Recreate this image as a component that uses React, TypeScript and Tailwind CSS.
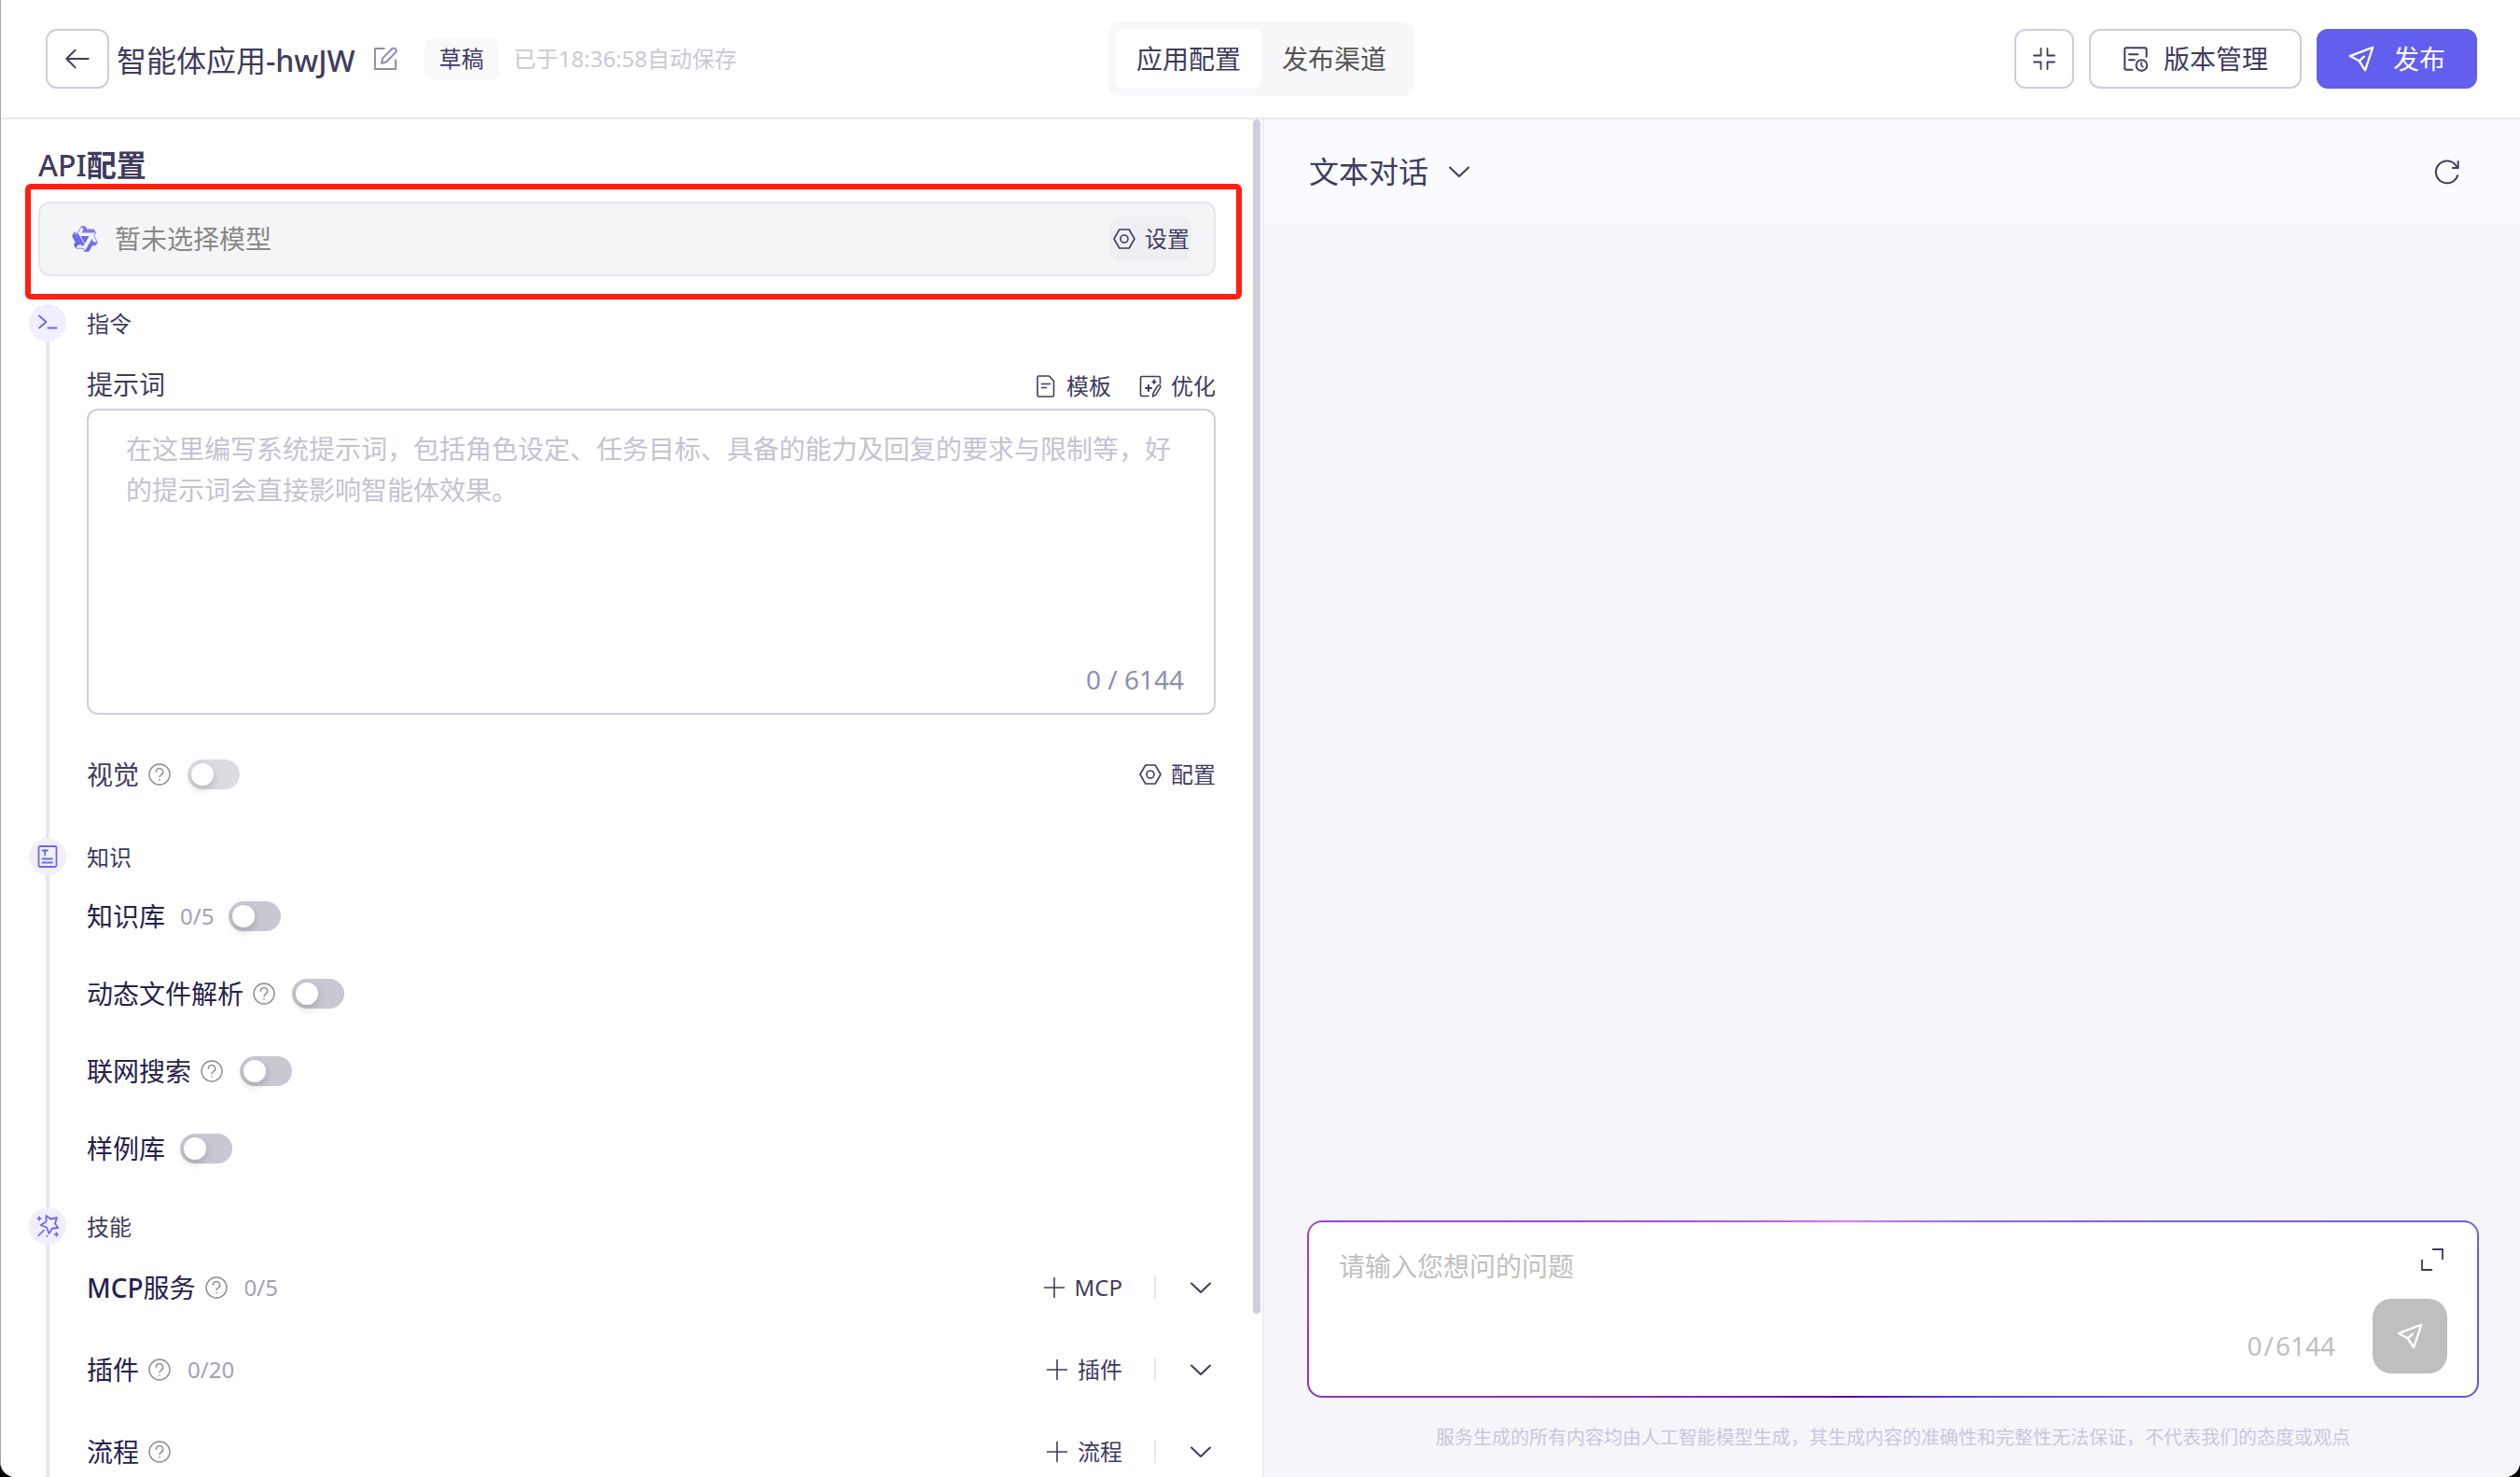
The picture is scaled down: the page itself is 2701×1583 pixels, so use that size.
import { useId, useState } from 'react'
import type { ReactNode } from 'react'

const PROMPT_LIMIT = 6144

function Icon({ children, className = 'size-6', width = 2 }: { children: ReactNode; className?: string; width?: number }) {
  return (
    <svg
      viewBox="0 0 24 24"
      className={`${className} shrink-0`}
      fill="none"
      stroke="currentColor"
      strokeWidth={width}
      strokeLinecap="round"
      strokeLinejoin="round"
      aria-hidden="true"
    >
      {children}
    </svg>
  )
}

const ArrowLeftIcon = () => (
  <Icon className="size-7">
    <path d="M22 12H3M10 4l-8 8 8 8" strokeWidth="1.7" />
  </Icon>
)

const EditIcon = () => (
  <Icon className="size-7">
    <path d="M11 2.5H2.5v19h19V13" strokeWidth="1.7" />
    <path d="M8.5 16l1-4.5 8.5-8.5a2.3 2.3 0 0 1 3.3 3.3L12.8 15z" strokeWidth="1.7" />
  </Icon>
)

const CollapseIcon = () => (
  <Icon>
    <path d="M8.5 1v7.5H1M15.5 1v7.5H23M8.5 23v-7.5H1M15.5 23v-7.5H23" strokeWidth="1.8" />
  </Icon>
)

const VersionIcon = () => (
  <Icon className="size-7">
    <path d="M22 10V3.5A1.5 1.5 0 0 0 20.5 2h-17A1.5 1.5 0 0 0 2 3.5v17A1.5 1.5 0 0 0 3.5 22H9M6 8h8M6 13h5" strokeWidth="1.7" />
    <circle cx="17.5" cy="18" r="5" strokeWidth="1.7" />
    <path d="M17.3 15.5V18l1.5 1.5" strokeWidth="1.5" />
  </Icon>
)

const SendIcon = () => (
  <Icon className="size-7">
    <path d="M22.5 1.5 1.5 9.5l8.5 4.5 5.5 8.5zM10 14l4.5-4" />
  </Icon>
)

const NutIcon = () => (
  <Icon>
    <path d="M6.8 2h10.4l5.8 10-5.8 10H6.8L1 12z" strokeWidth="1.6" />
    <circle cx="12" cy="12" r="4" strokeWidth="1.6" />
  </Icon>
)

const TemplateIcon = () => (
  <Icon>
    <path d="M4.5 1h11l5 5.5v15a1.5 1.5 0 0 1-1.5 1.5H4.5A1.5 1.5 0 0 1 3 21.5v-19A1.5 1.5 0 0 1 4.5 1zM7.5 9.5h9M7.5 13.5h5" strokeWidth="1.6" />
  </Icon>
)

const OptimizeIcon = () => (
  <Icon>
    <path d="M22.5 9V3A1.5 1.5 0 0 0 21 1.5H3A1.5 1.5 0 0 0 1.5 3v18A1.5 1.5 0 0 0 3 22.5h7" strokeWidth="1.6" />
    <path d="M10 11v6M7 14h6" strokeWidth="2.2" />
    <path d="M16 5.5v3.6M14.2 7.3h3.600" strokeWidth="1.8" />
    <path d="M15 19.500l4.800-8a1.600 1.600 0 0 1 2.800 1.600L17.800 21.200 14.500 23z" strokeWidth="1.5" />
  </Icon>
)

const RefreshIcon = () => (
  <Icon className="size-7">
    <path d="M21.5 15.5a10.2 10.2 0 1 1-1-8.5" strokeWidth="1.7" />
    <path d="M22 2.5v6h-5" strokeWidth="1.7" />
  </Icon>
)

const ExpandIcon = () => (
  <Icon>
    <path d="M12 1h11v11M1 12v11h11" strokeWidth="1.8" strokeLinecap="butt" strokeLinejoin="miter" />
  </Icon>
)

const ChevronIcon = () => (
  <Icon>
    <path d="M2 7.5l10 9.5 10-9.5" />
  </Icon>
)

const PlusIcon = () => (
  <Icon>
    <path d="M12 1.500v21M1.500 12h21" strokeWidth="1.6" />
  </Icon>
)

const CommandIcon = () => (
  <Icon>
    <path d="M3 4.5l7.5 6.5L3 17.5M12.5 17.5h9" strokeWidth="1.9" />
  </Icon>
)

const KnowledgeIcon = () => (
  <Icon>
    <rect x="2.5" y="1" width="19" height="22" rx="1.5" strokeWidth="1.8" />
    <path d="M6.5 5.5h5.5M9.2 5.5v5M6.5 14.5h10.5M6.5 18.5h10.5" strokeWidth="1.8" />
  </Icon>
)

const SkillIcon = () => (
  <Icon>
    <path d="M10.5 1l5 3.5 6.500-1.500-2 6.500 3.500 4.500-6.500.5-3.500 5.500-2.500-6.500L4.500 11l6-3.500z" strokeWidth="1.8" />
    <path d="M8 16.5 2 22.5M3 2v4M1 4h4M21.5 19v4M19.5 21h4M11.5 22.5v.8" strokeWidth="1.6" />
  </Icon>
)

function HelpIcon() {
  return (
    <Icon className="size-6 text-[#8c8c8c]">
      <circle cx="12" cy="12" r="11" strokeWidth="1.4" />
      <path d="M8.3 9.3a3.7 3.7 0 1 1 5.6 3.1c-1.2.7-1.9 1.2-1.9 2.4M12 17.4v.6" strokeWidth="1.4" />
    </Icon>
  )
}

function ModelLogo() {
  return (
    <svg viewBox="0 0 24 24" className="size-[30px] shrink-0" aria-hidden="true">
      <defs>
        <linearGradient id="model-logo" x1="0" y1="1" x2="1" y2="0">
          <stop offset="0" stopColor="#5d58ee" />
          <stop offset="1" stopColor="#8a86f4" />
        </linearGradient>
      </defs>
      <path
        fill="url(#model-logo)"
        fillRule="evenodd"
        d="M12.604 1.34c.393.69.784 1.382 1.174 2.075a.18.18 0 00.157.091h5.552c.174 0 .322.11.446.327l1.454 2.57c.19.337.24.478.024.837-.26.43-.513.864-.76 1.3l-.367.658c-.106.196-.223.28-.04.512l2.652 4.637c.172.301.111.494-.043.77-.437.785-.882 1.564-1.335 2.34-.159.272-.352.375-.68.37-.777-.016-1.552-.01-2.327.016a.099.099 0 00-.081.05 575.097 575.097 0 01-2.705 4.74c-.169.293-.38.363-.725.364-.997.003-2.002.004-3.017.002a.537.537 0 01-.465-.271l-1.335-2.323a.09.09 0 00-.083-.049H4.982c-.285.03-.553-.001-.805-.092l-1.603-2.77a.543.543 0 01-.002-.54l1.207-2.12a.198.198 0 000-.197 550.951 550.951 0 01-1.875-3.272l-.79-1.395c-.16-.31-.173-.496.095-.965.465-.813.927-1.625 1.387-2.436.132-.234.304-.334.584-.335a338.3 338.3 0 012.589-.001.124.124 0 00.107-.063l2.806-4.895a.488.488 0 01.422-.246c.524-.001 1.053 0 1.583-.006L11.704 1c.341-.003.724.032.9.34zm-3.432.403a.06.06 0 00-.052.03L6.254 6.788a.157.157 0 01-.135.078H3.253c-.056 0-.07.025-.041.074l5.81 10.156c.025.042.013.062-.034.063l-2.795.015a.218.218 0 00-.2.116l-1.32 2.31c-.044.078-.021.118.068.118l5.716.008c.046 0 .08.02.104.061l1.403 2.454c.046.081.092.082.139 0l5.006-8.76.783-1.382a.055.055 0 01.096 0l1.424 2.53a.122.122 0 00.107.062l2.763-.02a.04.04 0 00.035-.02.041.041 0 000-.04l-2.9-5.086a.108.108 0 010-.113l.293-.507 1.12-1.977c.024-.041.012-.062-.035-.062H9.2c-.059 0-.073-.026-.043-.077l1.434-2.505a.107.107 0 000-.114L9.225 1.774a.06.06 0 00-.053-.031zm6.29 8.02c.046 0 .058.02.034.06l-.832 1.465-2.613 4.585a.056.056 0 01-.05.029.058.058 0 01-.05-.029L8.498 9.841c-.02-.034-.01-.052.028-.054l.216-.012 6.722-.012z"
      />
      <path fill="#6a66ee" d="M3.600 7.600h2.800l5.400 9.600-1.500.7H9.500zM8.700 9.800h6.700l-3.500 6z" />
    </svg>
  )
}

function Switch({ id, disabled }: { id: string; disabled?: boolean }) {
  return (
    <input
      id={id}
      type="checkbox"
      role="switch"
      disabled={disabled}
      className="ml-4 h-8 w-14 shrink-0 cursor-pointer appearance-none rounded-full bg-[#c9c7d2] p-1 before:block before:size-6 before:rounded-full before:bg-white before:shadow-[0_4px_8px_rgba(0,35,11,0.2)] checked:bg-[#625eee] checked:before:ml-6 disabled:bg-[#dcdbe1]"
    />
  )
}

function SwitchRow({ label, count, help }: { label: string; count?: string; help?: boolean }) {
  const id = useId()
  return (
    <div className="flex h-[83px] items-center text-[28px] leading-[44px] text-[#26224d]">
      <label htmlFor={id}>{label}</label>
      {help && <span className="mr-0.5 ml-2.5"><HelpIcon /></span>}
      {count && <span className="ml-4 text-2xl text-[#a3a1b5]">{count}</span>}
      <Switch id={id} />
    </div>
  )
}

function SkillRow({ label, count, action }: { label: ReactNode; count?: string; action: string }) {
  return (
    <div className="flex h-[88px] items-center justify-between">
      <div className="flex items-center text-[28px] leading-[44px] text-[#26224d]">
        <span>{label}</span>
        <span className="mr-0.5 ml-2.5"><HelpIcon /></span>
        {count && <span className="ml-4 text-2xl text-[#a3a1b5]">{count}</span>}
      </div>
      <div className="flex items-center">
        <button type="button" className="flex items-center gap-2.5 text-2xl">
          <PlusIcon />
          {action}
        </button>
        <span className="ml-[34px] h-6 w-0.5 bg-[#e6e6ee]" />
        <button type="button" className="mr-1 ml-9" aria-label={`展开${action}`}>
          <ChevronIcon />
        </button>
      </div>
    </div>
  )
}

function Section({ icon, title, children, className = '' }: { icon: ReactNode; title: string; children: ReactNode; className?: string }) {
  return (
    <section className="flex gap-[22px]">
      <div className="flex w-10 shrink-0 flex-col items-center">
        <div className="flex size-10 shrink-0 items-center justify-center rounded-full bg-[#f1effe] text-[#6b66f2]">{icon}</div>
        <div className="w-1 flex-1 bg-[#e6e7ee]" />
      </div>
      <div className={`min-w-0 flex-1 ${className}`}>
        <h3 className="text-2xl leading-[42px]">{title}</h3>
        {children}
      </div>
    </section>
  )
}

function ToolButton({ icon, children }: { icon: ReactNode; children: ReactNode }) {
  return (
    <button type="button" className="flex items-center gap-2.5 text-2xl">
      {icon}
      {children}
    </button>
  )
}

function Header() {
  return (
    <header className="flex h-32 shrink-0 items-center border-b-2 border-[#e8e8ee] bg-white pr-[46px] pl-12">
      <div className="flex flex-1 items-center">
        <button type="button" aria-label="返回" className="flex h-16 w-[68px] items-center justify-center rounded-xl border-2 border-[#cdcddd]">
          <ArrowLeftIcon />
        </button>
        <h1 className="mt-1 ml-2 text-[32px] leading-10">
          智能体应用<span className="font-medium">-hwJW</span>
        </h1>
        <button type="button" aria-label="编辑名称" className="ml-[18px] text-[#8b8db0]">
          <EditIcon />
        </button>
        <span className="ml-7 rounded-lg bg-[#f9f9fa] px-4 text-2xl leading-[44px]">草稿</span>
        <span className="ml-4 text-2xl text-[#c9c9d4]">已于18:36:58自动保存</span>
      </div>
      <nav className="flex rounded-xl bg-[#f8f8fa] p-2 text-[28px]">
        <button type="button" className="h-16 rounded-lg bg-white px-[22px]">应用配置</button>
        <button type="button" className="h-16 px-[22px] text-[#555555]">发布渠道</button>
      </nav>
      <div className="flex flex-1 items-center justify-end gap-4 text-[28px]">
        <button type="button" aria-label="收起" className="flex size-16 items-center justify-center rounded-xl border-2 border-[#cdcddd]">
          <CollapseIcon />
        </button>
        <button type="button" className="flex h-16 items-center gap-4 rounded-xl border-2 border-[#cdcddd] px-[34px]">
          <VersionIcon />
          版本管理
        </button>
        <button type="button" className="flex h-16 items-center gap-5 rounded-xl bg-[#625eee] px-[34px] text-white">
          <SendIcon />
          发布
        </button>
      </div>
    </header>
  )
}

function ConfigPanel() {
  const [prompt, setPrompt] = useState('')
  const visionId = useId()
  const promptId = useId()

  return (
    <div className="flex w-[calc(50%+4px)] shrink-0 border-r-2 border-[#ececf3] bg-white">
      <div className="min-w-0 flex-1 overflow-hidden pr-3 pl-[26px]">
        <h2 className="mt-7 ml-3.5 text-[32px] leading-[41px] font-bold">
          <span className="font-medium">API</span>配置
        </h2>

        {/* highlighted model picker */}
        <div className="rounded-md border-[6px] border-[#ff1f11] pt-[13px] pr-[22px] pb-[19px] pl-2">
          <div className="flex h-20 items-center rounded-xl border-2 border-[#e6e6ed] bg-[#f4f5f7] pr-6 pl-[33px]">
            <ModelLogo />
            <span className="ml-[17px] flex-1 text-[28px] text-[#888888]">暂未选择模型</span>
            <button type="button" className="flex h-12 items-center gap-2.5 rounded-xl bg-[#eeeff3] pr-0.5 pl-1 text-2xl">
              <NutIcon />
              设置
            </button>
          </div>
        </div>

        <div className="mt-[5px] mr-7 ml-1">
          <Section icon={<CommandIcon />} title="指令" className="pb-[46px]">
            <div className="mt-[22px] mb-1 flex h-11 items-center justify-between">
              <label htmlFor={promptId} className="text-[28px] leading-[44px]">提示词</label>
              <div className="mt-1 flex items-center gap-[30px]">
                <ToolButton icon={<TemplateIcon />}>模板</ToolButton>
                <ToolButton icon={<OptimizeIcon />}>优化</ToolButton>
              </div>
            </div>
            <div className="flex h-[328px] flex-col rounded-xl border-2 border-[#cdcfde] pb-3.5 text-[28px] leading-[44px]">
              <textarea
                id={promptId}
                className="block w-full flex-1 resize-none px-10 pt-[19px] outline-none placeholder:text-[#c4c3d0]"
                placeholder="在这里编写系统提示词，包括角色设定、任务目标、具备的能力及回复的要求与限制等，好的提示词会直接影响智能体效果。"
                maxLength={PROMPT_LIMIT}
                value={prompt}
                onChange={(e) => setPrompt(e.target.value)}
              />
              <span className="pr-8 text-right text-[#8d90b0]">{prompt.length} / {PROMPT_LIMIT}</span>
            </div>
            <div className="mt-[42px] flex h-11 items-center justify-between">
              <div className="flex items-center text-[28px] leading-[44px]">
                <label htmlFor={visionId}>视觉</label>
                <span className="mr-0.5 ml-2.5"><HelpIcon /></span>
                <Switch id={visionId} disabled />
              </div>
              <ToolButton icon={<NutIcon />}>配置</ToolButton>
            </div>
          </Section>

          <Section icon={<KnowledgeIcon />} title="知识" className="pb-[22px]">
            <SwitchRow label="知识库" count="0/5" />
            <SwitchRow label="动态文件解析" help />
            <SwitchRow label="联网搜索" help />
            <SwitchRow label="样例库" />
          </Section>

          <Section icon={<SkillIcon />} title="技能">
            <SkillRow label={<><span className="font-medium">MCP</span>服务</>} count="0/5" action="MCP" />
            <SkillRow label="插件" count="0/20" action="插件" />
            <SkillRow label="流程" action="流程" />
          </Section>
        </div>
      </div>
      <div className="mr-0.5 h-[88%] w-2 shrink-0 rounded-full bg-[#cdcfdd]" />
    </div>
  )
}

function ChatPanel() {
  const [question, setQuestion] = useState('')

  return (
    <main className="flex min-w-0 flex-1 flex-col bg-[#f5f5fa]">
      <div className="flex h-28 shrink-0 items-center justify-between bg-[#f9fbff] pr-16 pl-12">
        <div className="flex items-center gap-5">
          <select aria-label="对话模式" className="appearance-none text-[32px] leading-[44px] outline-none">
            <option>文本对话</option>
          </select>
          <ChevronIcon />
        </div>
        <button type="button" aria-label="刷新">
          <RefreshIcon />
        </button>
      </div>
      <div className="mt-auto mr-11 mb-6 ml-[46px]">
        <div className="rounded-2xl bg-[conic-gradient(from_0deg_at_46%_50%,#dc78ff_0deg,#7a62ec_75deg,#625eea_90deg,#5b50e0_110deg,#5a00a0_180deg,#9330c4_260deg,#a545dc_285deg,#dc78ff_360deg)] p-0.5">
          <div className="flex h-[186px] rounded-[14px] bg-white pt-[25px] pr-8 pb-6 pl-8">
            <textarea
              aria-label="问题"
              className="min-w-0 flex-1 resize-none text-[28px] leading-[44px] outline-none placeholder:text-[#bfbfbf]"
              placeholder="请输入您想问的问题"
              maxLength={PROMPT_LIMIT}
              value={question}
              onChange={(e) => setQuestion(e.target.value)}
            />
            <div className="flex flex-col items-end justify-between">
              <button type="button" aria-label="放大输入框" className="mt-[3px] mr-1">
                <ExpandIcon />
              </button>
              <div className="flex items-center gap-10">
                <span className="mt-5 flex gap-0.5 text-[28px] leading-[44px] text-[#bfbfbf]">
                  <span>{question.length}</span>
                  <span>/</span>
                  <span>{PROMPT_LIMIT}</span>
                </span>
                <button type="button" aria-label="发送" className="flex size-20 items-center justify-center rounded-[20px] bg-[#bfbfbf] text-white">
                  <SendIcon />
                </button>
              </div>
            </div>
          </div>
        </div>
        <p className="mt-[25px] text-center text-xl leading-9 text-[#c8c8dc]">
          服务生成的所有内容均由人工智能模型生成，其生成内容的准确性和完整性无法保证，不代表我们的态度或观点
        </p>
      </div>
    </main>
  )
}

export default function App() {
  return (
    <div className="h-screen bg-black font-['Noto_Sans','Noto_Sans_CJK_SC',sans-serif] text-[#3f3b60]">
      <div className="flex h-full flex-col overflow-hidden rounded-b-2xl border-l border-[#a6a6a6] bg-white">
        <Header />
        <div className="flex min-h-0 flex-1">
          <ConfigPanel />
          <ChatPanel />
        </div>
      </div>
    </div>
  )
}
